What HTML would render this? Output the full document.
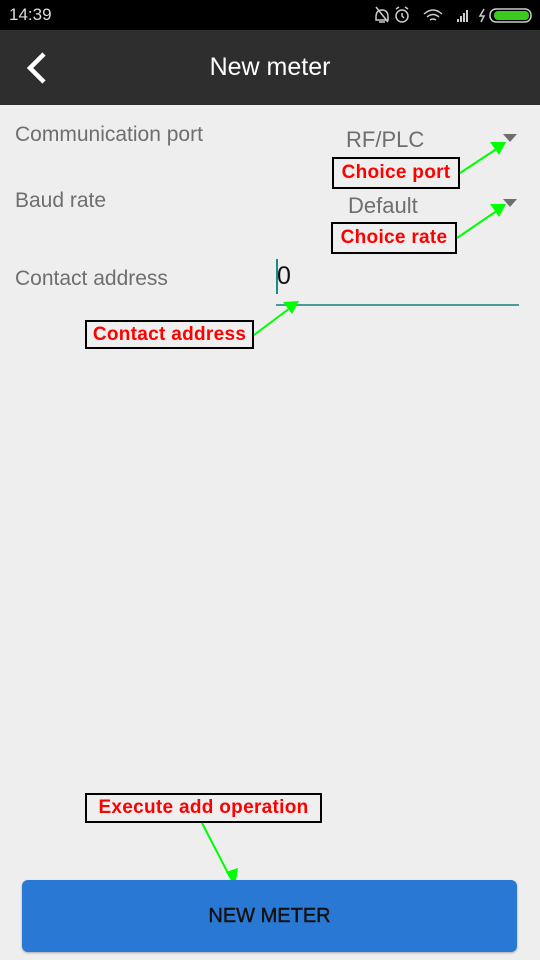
<!DOCTYPE html>
<html><head><meta charset="utf-8"><style>
*{margin:0;padding:0;box-sizing:border-box}
body{width:540px;height:960px;background:#eeeeee;font-family:"Liberation Sans",sans-serif;position:relative;overflow:hidden}
.abs{position:absolute}
.lbl{color:#6e6e6e;font-size:21px}
.val{color:#6e6e6e;font-size:22px}
.box{position:absolute;border:2px solid #000;background:#efefef;color:#f00;font-weight:bold;font-family:"Liberation Sans",sans-serif;font-size:19px;text-align:center;line-height:28px;white-space:nowrap;letter-spacing:0.3px}
</style></head><body>
<div class="abs" style="left:0;top:0;width:540px;height:30px;background:#000"></div>
<div class="abs" style="left:9px;top:5px;color:#ddd;font-size:17px">14:39</div>
<svg class="abs" style="left:365px;top:4px" width="170" height="22" viewBox="0 0 170 22">
<g fill="none" stroke="#ccc" stroke-width="1.5">
<path d="M17 6 q6 0 6 7 v3 h-12 v-3 q0-7 6-7z M14 18h6 M11 3 L23 18"/>
<circle cx="37" cy="12" r="6"/><path d="M37 9v3l2 2 M31 5l3-2 M43 5l-3-2"/>
<path d="M59 10 q9-8 18 0 M62 13 q6-5 12 0 M65 16 q3-2 6 0"/>
<path d="M119 5 l-4 7 h4 l-3 6"/>
<rect x="125" y="5" width="41" height="13" rx="6"/>
</g>
<rect x="129" y="7" width="35" height="9" rx="4" fill="#3bcb1f"/>
<g fill="#ccc"><rect x="92" y="15" width="2" height="3"/><rect x="95" y="12" width="2" height="6"/><rect x="98" y="9" width="2" height="9"/><rect x="101" y="6" width="2" height="12"/></g>
</svg>
<div class="abs" style="left:0;top:30px;width:540px;height:75px;background:#2e2e2e"></div>
<svg class="abs" style="left:22px;top:50px" width="30" height="36"><path d="M22 4 L8 18 L22 32" fill="none" stroke="#fff" stroke-width="4.5"/></svg>
<div class="abs" style="left:0;top:53px;width:540px;text-align:center;color:#fff;font-size:25px">New meter</div>

<div class="abs lbl" style="left:15px;top:123px">Communication port</div>
<div class="abs val" style="left:346px;top:127px">RF/PLC</div>
<div class="abs lbl" style="left:15px;top:189px">Baud rate</div>
<div class="abs val" style="left:348px;top:193px">Default</div>
<div class="abs lbl" style="left:15px;top:267px">Contact address</div>
<svg class="abs" style="left:500px;top:132px" width="20" height="80"><path d="M3 2h14l-7 8z M3 67h14l-7 8z" fill="#6e6e6e"/></svg>
<div class="abs" style="left:276px;top:259px;width:2px;height:35px;background:#1a8c82"></div>
<div class="abs" style="left:277px;top:262px;font-size:25px;color:#111">0</div>
<div class="abs" style="left:276px;top:304px;width:243px;height:2px;background:#4b9c95"></div>

<div class="box" style="left:332px;top:157px;width:128px;height:32px">Choice port</div>
<div class="box" style="left:331px;top:222px;width:126px;height:32px">Choice rate</div>
<div class="box" style="left:85px;top:320px;width:169px;height:29px;line-height:25px">Contact address</div>
<div class="box" style="left:85px;top:793px;width:237px;height:30px;line-height:26px">Execute add operation</div>

<svg class="abs" style="left:0;top:0" width="540" height="960">
<g stroke="#00ff00" stroke-width="2"><line x1="460" y1="173" x2="498" y2="148"/><line x1="457" y1="238" x2="498" y2="210"/><line x1="254" y1="335" x2="290" y2="308"/><line x1="202" y1="823" x2="230" y2="877"/></g>
<g fill="#00ff00"><path d="M506 142 L490 142 L499 155z"/><path d="M506 204 L490 204 L499 217z"/><path d="M299 301 L283 302 L292 314z"/><path d="M235 887 L226 872 L238 868z"/></g>
</svg>

<div class="abs" style="left:22px;top:880px;width:495px;height:72px;background:#2979d4;border-radius:6px;box-shadow:0 1px 2px rgba(0,0,0,.3);text-align:center;line-height:72px;color:#111;font-size:20px;-webkit-text-stroke:0.4px #111">NEW METER</div>
</body></html>
